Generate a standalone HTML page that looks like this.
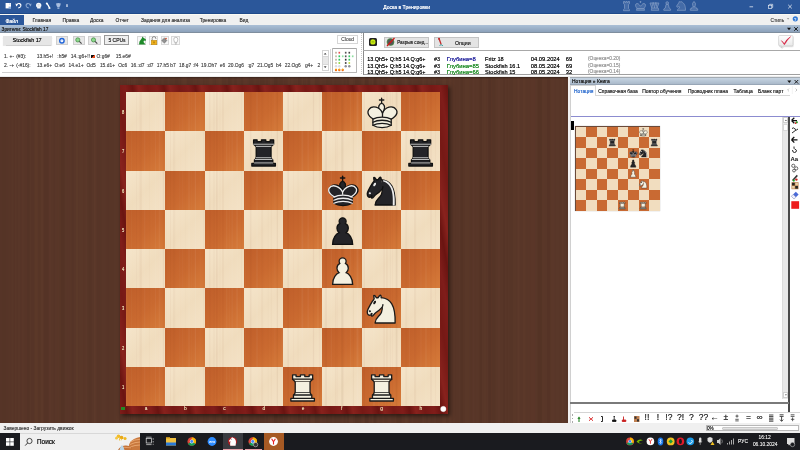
<!DOCTYPE html><html><head><meta charset="utf-8"><style>
*{margin:0;padding:0;box-sizing:border-box}
html,body{width:800px;height:450px;overflow:hidden;background:#fff;font-family:"Liberation Sans",sans-serif;position:relative}
.a{position:absolute}
.t{position:absolute;white-space:nowrap;line-height:1;text-shadow:0 0 0.25px currentColor}
svg{position:absolute;overflow:visible}
</style></head><body><div id="root" class="a" style="left:0;top:0;width:800px;height:450px;will-change:transform">
<div class="a" style="left:0px;top:0px;width:800px;height:13.7px;background:#2b579a;border-bottom:0.9px solid #1f4a8a"></div>
<div class="a" style="left:0px;top:13.7px;width:800px;height:11.3px;background:#f0f0f0;border-top:0.8px solid #fbfaf3"></div>
<div class="a" style="left:0px;top:25px;width:800px;height:8px;background:linear-gradient(#abbfd6,#8ca1ba);border-bottom:1px solid #7f8e9e"></div>
<div class="a" style="left:0px;top:33px;width:800px;height:42px;background:#fff"></div>
<div class="a" style="left:0px;top:75.8px;width:800px;height:1.4px;background:#ececec"></div>
<div class="a" style="left:362.5px;top:74.2px;width:437.5px;height:0.8px;background:#a0a0a0"></div>
<div class="a" style="left:0px;top:77px;width:568px;height:346px;background:#583628"></div>
<svg style="left:0;top:77px" width="568" height="346"><rect x="0.0" y="0" width="1.9" height="346" fill="#4f2f23" opacity="0.19"/><rect x="2.0" y="0" width="3.8" height="346" fill="#4a2b20" opacity="0.18"/><rect x="6.0" y="0" width="2.6" height="346" fill="#4a2b20" opacity="0.12"/><rect x="9.8" y="0" width="1.5" height="346" fill="#523125" opacity="0.19"/><rect x="13.8" y="0" width="1.1" height="346" fill="#4f2f23" opacity="0.24"/><rect x="16.7" y="0" width="0.8" height="346" fill="#523125" opacity="0.19"/><rect x="20.4" y="0" width="0.8" height="346" fill="#4f2f23" opacity="0.16"/><rect x="21.7" y="0" width="1.1" height="346" fill="#633d2d" opacity="0.22"/><rect x="24.8" y="0" width="1.0" height="346" fill="#523125" opacity="0.24"/><rect x="26.9" y="0" width="2.7" height="346" fill="#4a2b20" opacity="0.22"/><rect x="31.5" y="0" width="2.5" height="346" fill="#523125" opacity="0.19"/><rect x="34.9" y="0" width="2.9" height="346" fill="#67412f" opacity="0.18"/><rect x="38.6" y="0" width="1.3" height="346" fill="#4f2f23" opacity="0.12"/><rect x="40.8" y="0" width="2.5" height="346" fill="#633d2d" opacity="0.26"/><rect x="44.2" y="0" width="4.4" height="346" fill="#4a2b20" opacity="0.21"/><rect x="49.1" y="0" width="1.9" height="346" fill="#67412f" opacity="0.19"/><rect x="53.9" y="0" width="0.9" height="346" fill="#523125" opacity="0.23"/><rect x="57.4" y="0" width="1.8" height="346" fill="#5f3a2b" opacity="0.18"/><rect x="60.8" y="0" width="3.7" height="346" fill="#4a2b20" opacity="0.28"/><rect x="67.3" y="0" width="2.4" height="346" fill="#5f3a2b" opacity="0.11"/><rect x="71.9" y="0" width="1.8" height="346" fill="#523125" opacity="0.32"/><rect x="76.2" y="0" width="1.7" height="346" fill="#67412f" opacity="0.30"/><rect x="79.0" y="0" width="4.3" height="346" fill="#633d2d" opacity="0.14"/><rect x="83.6" y="0" width="0.8" height="346" fill="#633d2d" opacity="0.13"/><rect x="85.2" y="0" width="2.1" height="346" fill="#67412f" opacity="0.12"/><rect x="88.6" y="0" width="2.7" height="346" fill="#4f2f23" opacity="0.28"/><rect x="94.0" y="0" width="1.7" height="346" fill="#67412f" opacity="0.32"/><rect x="97.7" y="0" width="2.1" height="346" fill="#4f2f23" opacity="0.13"/><rect x="100.3" y="0" width="1.5" height="346" fill="#4f2f23" opacity="0.10"/><rect x="104.3" y="0" width="1.3" height="346" fill="#633d2d" opacity="0.10"/><rect x="106.9" y="0" width="2.0" height="346" fill="#523125" opacity="0.17"/><rect x="109.3" y="0" width="4.0" height="346" fill="#523125" opacity="0.24"/><rect x="115.5" y="0" width="2.4" height="346" fill="#5f3a2b" opacity="0.28"/><rect x="119.0" y="0" width="2.2" height="346" fill="#4a2b20" opacity="0.21"/><rect x="122.4" y="0" width="1.3" height="346" fill="#4f2f23" opacity="0.20"/><rect x="124.1" y="0" width="2.9" height="346" fill="#4a2b20" opacity="0.10"/><rect x="127.4" y="0" width="1.0" height="346" fill="#633d2d" opacity="0.24"/><rect x="128.7" y="0" width="1.4" height="346" fill="#67412f" opacity="0.13"/><rect x="130.8" y="0" width="2.0" height="346" fill="#633d2d" opacity="0.20"/><rect x="133.1" y="0" width="2.5" height="346" fill="#67412f" opacity="0.21"/><rect x="136.6" y="0" width="1.2" height="346" fill="#5f3a2b" opacity="0.18"/><rect x="138.5" y="0" width="3.8" height="346" fill="#4f2f23" opacity="0.21"/><rect x="143.0" y="0" width="4.3" height="346" fill="#633d2d" opacity="0.13"/><rect x="148.9" y="0" width="0.7" height="346" fill="#523125" opacity="0.17"/><rect x="151.5" y="0" width="1.0" height="346" fill="#633d2d" opacity="0.21"/><rect x="155.2" y="0" width="2.0" height="346" fill="#4f2f23" opacity="0.22"/><rect x="159.5" y="0" width="1.9" height="346" fill="#4f2f23" opacity="0.23"/><rect x="163.8" y="0" width="3.6" height="346" fill="#4f2f23" opacity="0.28"/><rect x="169.8" y="0" width="3.5" height="346" fill="#4f2f23" opacity="0.14"/><rect x="174.8" y="0" width="3.5" height="346" fill="#4a2b20" opacity="0.27"/><rect x="179.6" y="0" width="1.4" height="346" fill="#523125" opacity="0.31"/><rect x="182.3" y="0" width="4.3" height="346" fill="#633d2d" opacity="0.31"/><rect x="187.7" y="0" width="1.5" height="346" fill="#4f2f23" opacity="0.20"/><rect x="190.2" y="0" width="2.5" height="346" fill="#523125" opacity="0.28"/><rect x="194.1" y="0" width="3.1" height="346" fill="#5f3a2b" opacity="0.12"/><rect x="199.2" y="0" width="4.1" height="346" fill="#5f3a2b" opacity="0.27"/><rect x="204.8" y="0" width="1.3" height="346" fill="#5f3a2b" opacity="0.17"/><rect x="208.5" y="0" width="4.4" height="346" fill="#67412f" opacity="0.20"/><rect x="215.1" y="0" width="0.9" height="346" fill="#4f2f23" opacity="0.14"/><rect x="216.4" y="0" width="1.2" height="346" fill="#67412f" opacity="0.28"/><rect x="218.1" y="0" width="3.8" height="346" fill="#67412f" opacity="0.24"/><rect x="222.9" y="0" width="2.7" height="346" fill="#4f2f23" opacity="0.10"/><rect x="228.1" y="0" width="3.4" height="346" fill="#4a2b20" opacity="0.22"/><rect x="234.3" y="0" width="2.3" height="346" fill="#4f2f23" opacity="0.28"/><rect x="237.2" y="0" width="1.6" height="346" fill="#633d2d" opacity="0.21"/><rect x="241.1" y="0" width="1.9" height="346" fill="#523125" opacity="0.19"/><rect x="243.4" y="0" width="4.1" height="346" fill="#633d2d" opacity="0.30"/><rect x="249.5" y="0" width="3.8" height="346" fill="#523125" opacity="0.19"/><rect x="256.0" y="0" width="2.6" height="346" fill="#523125" opacity="0.13"/><rect x="260.1" y="0" width="4.0" height="346" fill="#4f2f23" opacity="0.23"/><rect x="266.4" y="0" width="1.2" height="346" fill="#4f2f23" opacity="0.20"/><rect x="269.8" y="0" width="2.8" height="346" fill="#633d2d" opacity="0.25"/><rect x="274.2" y="0" width="2.5" height="346" fill="#4a2b20" opacity="0.29"/><rect x="276.8" y="0" width="1.3" height="346" fill="#4a2b20" opacity="0.27"/><rect x="279.7" y="0" width="2.8" height="346" fill="#4a2b20" opacity="0.20"/><rect x="284.3" y="0" width="2.6" height="346" fill="#523125" opacity="0.14"/><rect x="287.7" y="0" width="2.6" height="346" fill="#67412f" opacity="0.21"/><rect x="291.0" y="0" width="2.6" height="346" fill="#633d2d" opacity="0.30"/><rect x="296.4" y="0" width="1.4" height="346" fill="#67412f" opacity="0.13"/><rect x="298.1" y="0" width="2.3" height="346" fill="#4a2b20" opacity="0.25"/><rect x="301.7" y="0" width="1.4" height="346" fill="#633d2d" opacity="0.27"/><rect x="305.9" y="0" width="1.2" height="346" fill="#5f3a2b" opacity="0.24"/><rect x="308.2" y="0" width="1.6" height="346" fill="#4f2f23" opacity="0.31"/><rect x="310.4" y="0" width="4.3" height="346" fill="#67412f" opacity="0.29"/><rect x="315.2" y="0" width="3.2" height="346" fill="#4f2f23" opacity="0.14"/><rect x="319.7" y="0" width="2.6" height="346" fill="#633d2d" opacity="0.19"/><rect x="323.4" y="0" width="1.0" height="346" fill="#633d2d" opacity="0.10"/><rect x="326.0" y="0" width="2.3" height="346" fill="#4a2b20" opacity="0.18"/><rect x="329.9" y="0" width="1.8" height="346" fill="#4a2b20" opacity="0.12"/><rect x="334.4" y="0" width="1.5" height="346" fill="#4a2b20" opacity="0.12"/><rect x="336.7" y="0" width="4.1" height="346" fill="#4f2f23" opacity="0.16"/><rect x="341.2" y="0" width="2.2" height="346" fill="#5f3a2b" opacity="0.28"/><rect x="344.2" y="0" width="1.2" height="346" fill="#523125" opacity="0.23"/><rect x="347.5" y="0" width="0.9" height="346" fill="#4a2b20" opacity="0.28"/><rect x="349.0" y="0" width="4.1" height="346" fill="#633d2d" opacity="0.31"/><rect x="355.0" y="0" width="3.7" height="346" fill="#4a2b20" opacity="0.23"/><rect x="359.4" y="0" width="1.6" height="346" fill="#4a2b20" opacity="0.20"/><rect x="362.1" y="0" width="2.8" height="346" fill="#633d2d" opacity="0.24"/><rect x="364.9" y="0" width="3.4" height="346" fill="#4a2b20" opacity="0.31"/><rect x="369.1" y="0" width="1.3" height="346" fill="#633d2d" opacity="0.24"/><rect x="372.0" y="0" width="1.4" height="346" fill="#67412f" opacity="0.21"/><rect x="373.9" y="0" width="2.0" height="346" fill="#4a2b20" opacity="0.32"/><rect x="376.0" y="0" width="0.7" height="346" fill="#523125" opacity="0.22"/><rect x="377.2" y="0" width="2.5" height="346" fill="#67412f" opacity="0.12"/><rect x="382.1" y="0" width="2.3" height="346" fill="#67412f" opacity="0.22"/><rect x="387.1" y="0" width="4.4" height="346" fill="#633d2d" opacity="0.25"/><rect x="394.4" y="0" width="1.9" height="346" fill="#5f3a2b" opacity="0.26"/><rect x="396.8" y="0" width="4.5" height="346" fill="#4a2b20" opacity="0.28"/><rect x="401.3" y="0" width="3.0" height="346" fill="#633d2d" opacity="0.19"/><rect x="404.5" y="0" width="3.2" height="346" fill="#67412f" opacity="0.29"/><rect x="409.7" y="0" width="1.7" height="346" fill="#4f2f23" opacity="0.25"/><rect x="411.5" y="0" width="1.3" height="346" fill="#633d2d" opacity="0.20"/><rect x="413.6" y="0" width="4.4" height="346" fill="#523125" opacity="0.17"/><rect x="418.1" y="0" width="4.0" height="346" fill="#4f2f23" opacity="0.18"/><rect x="422.1" y="0" width="2.1" height="346" fill="#67412f" opacity="0.16"/><rect x="426.2" y="0" width="1.6" height="346" fill="#4a2b20" opacity="0.12"/><rect x="430.2" y="0" width="1.2" height="346" fill="#523125" opacity="0.11"/><rect x="431.4" y="0" width="1.8" height="346" fill="#4f2f23" opacity="0.12"/><rect x="436.1" y="0" width="3.9" height="346" fill="#4f2f23" opacity="0.24"/><rect x="442.2" y="0" width="4.0" height="346" fill="#67412f" opacity="0.27"/><rect x="448.4" y="0" width="2.5" height="346" fill="#633d2d" opacity="0.26"/><rect x="452.8" y="0" width="0.8" height="346" fill="#5f3a2b" opacity="0.30"/><rect x="455.5" y="0" width="3.5" height="346" fill="#523125" opacity="0.13"/><rect x="460.5" y="0" width="2.6" height="346" fill="#4a2b20" opacity="0.28"/><rect x="464.8" y="0" width="4.1" height="346" fill="#5f3a2b" opacity="0.31"/><rect x="470.8" y="0" width="0.9" height="346" fill="#4a2b20" opacity="0.13"/><rect x="472.9" y="0" width="1.0" height="346" fill="#67412f" opacity="0.22"/><rect x="475.7" y="0" width="3.0" height="346" fill="#5f3a2b" opacity="0.15"/><rect x="479.6" y="0" width="2.4" height="346" fill="#4a2b20" opacity="0.26"/><rect x="483.5" y="0" width="2.7" height="346" fill="#5f3a2b" opacity="0.22"/><rect x="488.4" y="0" width="2.4" height="346" fill="#4a2b20" opacity="0.29"/><rect x="491.6" y="0" width="3.6" height="346" fill="#4f2f23" opacity="0.26"/><rect x="498.0" y="0" width="2.5" height="346" fill="#67412f" opacity="0.12"/><rect x="503.3" y="0" width="1.7" height="346" fill="#4a2b20" opacity="0.24"/><rect x="506.9" y="0" width="0.9" height="346" fill="#4f2f23" opacity="0.17"/><rect x="509.8" y="0" width="3.3" height="346" fill="#523125" opacity="0.22"/><rect x="513.1" y="0" width="0.8" height="346" fill="#633d2d" opacity="0.31"/><rect x="514.3" y="0" width="1.4" height="346" fill="#67412f" opacity="0.16"/><rect x="517.3" y="0" width="2.4" height="346" fill="#67412f" opacity="0.27"/><rect x="522.7" y="0" width="2.7" height="346" fill="#633d2d" opacity="0.32"/><rect x="528.2" y="0" width="0.7" height="346" fill="#67412f" opacity="0.12"/><rect x="530.4" y="0" width="4.5" height="346" fill="#633d2d" opacity="0.19"/><rect x="537.6" y="0" width="4.2" height="346" fill="#4a2b20" opacity="0.23"/><rect x="542.3" y="0" width="2.6" height="346" fill="#633d2d" opacity="0.13"/><rect x="547.4" y="0" width="2.6" height="346" fill="#4a2b20" opacity="0.25"/><rect x="550.7" y="0" width="4.1" height="346" fill="#67412f" opacity="0.19"/><rect x="555.2" y="0" width="4.3" height="346" fill="#5f3a2b" opacity="0.20"/><rect x="560.4" y="0" width="1.1" height="346" fill="#633d2d" opacity="0.18"/><rect x="562.0" y="0" width="1.9" height="346" fill="#633d2d" opacity="0.27"/><rect x="566.4" y="0" width="1.1" height="346" fill="#4f2f23" opacity="0.26"/></svg>
<div class="a" style="left:0px;top:77px;width:568px;height:2px;background:linear-gradient(rgba(0,0,0,0.35),rgba(0,0,0,0))"></div>
<div class="a" style="left:568px;top:77px;width:2px;height:346px;background:#f2f2f2"></div>
<div class="a" style="left:570px;top:77px;width:230px;height:346px;background:#fff"></div>
<div class="a" style="left:0px;top:423px;width:800px;height:10px;background:#f0f0f0"></div>
<div class="a" style="left:0px;top:433px;width:800px;height:17px;background:#1a1b1f"></div>
<svg style="left:0;top:0" width="80" height="13"><rect x="5.6" y="3" width="5.4" height="5.4" fill="#fff"/><path d="M8.6 6.6 h2.4 v1.8 h-2.4z" fill="#8fb0e0"/><rect x="9.2" y="3.3" width="1.2" height="1.6" fill="#c8d8f0"/><path d="M16.3 5.2 Q17.5 3.2 19.5 3.6 Q21.3 4.1 20.8 6.2 Q20.3 7.8 18.3 7.9" stroke="#fff" stroke-width="1.1" fill="none"/><path d="M15.4 3.6 L18.2 4.4 L16.2 6.6Z" fill="#fff"/><path d="M30.7 5.2 Q29.5 3.2 27.5 3.6 Q25.7 4.1 26.2 6.2 Q26.7 7.8 28.7 7.9" stroke="#8aa6cf" stroke-width="1.1" fill="none"/><path d="M31.6 3.6 L28.8 4.4 L30.8 6.6Z" fill="#8aa6cf"/><path d="M36 5.6 Q36 2.8 38.6 2.8 Q41.4 2.8 41.4 5.4 Q41.4 6.6 40.6 7 L40.6 8.6 L37.2 8.6 L37.2 7.4 Q36 7 36 5.6Z" fill="#f4f6fa"/><path d="M37.6 4.6 h2M37.6 6 h2" stroke="#9ab" stroke-width="0.4"/><path d="M46.8 3.4 L48.2 5.4 L49.8 8.4" stroke="#fff" stroke-width="1.3" fill="none"/><circle cx="46.8" cy="3.4" r="1" fill="#fff"/><rect x="48.4" y="7.6" width="2" height="1.2" fill="#fff"/><path d="M56 3.6 Q58.4 2.6 60.8 3.6 Q60.4 6.4 59.2 7.2 L57.6 7.2 Q56.4 6.4 56 3.6Z" fill="#a9bedf"/><rect x="57.4" y="7.6" width="2" height="1.2" fill="#a9bedf"/><rect x="66.2" y="4.2" width="1.6" height="2.8" fill="#b9c8e0"/></svg>
<div class="t" style="left:383.2px;top:5.4px;font-size:5.05px;color:#fff;">Доска в Тренировки</div>
<svg style="left:620px;top:0" width="90" height="13" opacity="0.42"><g fill="rgba(220,230,245,0.35)" stroke="#e8eef8" stroke-width="0.8"><path d="M3.5 1.5h1.4v1h1v-1h1.2v1h1v-1h1.4v2.2l-1 .8v4.2l1 1v1h-6v-1l1-1V4.5l-1-.8z"/><path d="M20.5 1v2M19.6 1.8h1.8M15.5 5.2c0-2 2.5-2.3 3.7-.5l1.3 1.6 1.3-1.6c1.2-1.8 3.7-1.5 3.7.5 0 1.5-1.2 2.5-1.5 3.5h-7c-.3-1-1.5-2-1.5-3.5zM16.8 8.7h7.4l.4 1.6h-8.2z"/><path d="M30 3l1.8 5 1.4-5.6 1.3 5.6 1.3-5.6 1.3 5.6 1.8-5zM31.8 8h6.4l.6 2.3h-7.6z"/><circle cx="47.2" cy="3" r="1.3"/><path d="M46 4.5l-.7 3.5-1.5 1v1.3h6.8v-1.3l-1.5-1-.7-3.5z"/><path d="M57 10.3h8.5c0-3.5-.5-7-4.5-8.8l-1 .8-.8-.8-.4 1.4-2.2 3.2.6 1.2 1.8-.8.8.5-1.3 2z"/><path d="M74 1.2v1.2M72.5 3.5c0-1 .8-1.3 1.5-1.3s1.5.3 1.5 1.3c0 1.3-.6 2.3-.3 3h-2.4c.3-.7-.3-1.7-.3-3zM71.5 7.8h5v1h1.2v1.5h-7.4V8.8h1.2z"/></g></svg>
<svg style="left:740px;top:0" width="60" height="13"><path d="M9.5 6.8h3.6" stroke="#fff" stroke-width="0.7"/><rect x="28.6" y="5.2" width="3.2" height="3.2" fill="none" stroke="#fff" stroke-width="0.6"/><path d="M29.6 5.2V4.3h3.1v3.1h-0.9" fill="none" stroke="#fff" stroke-width="0.6"/><path d="M48.2 4.8l3.6 3.6M51.8 4.8l-3.6 3.6" stroke="#fff" stroke-width="0.7"/></svg>
<div class="a" style="left:0px;top:14.5px;width:24px;height:10.5px;background:#2b579a"></div>
<div class="t" style="left:5.4px;top:19.0px;font-size:5.2px;color:#fff;">Файл</div>
<div class="t" style="left:32.5px;top:19.4px;font-size:4.9px;color:#444;">Главная</div>
<div class="t" style="left:62.6px;top:19.4px;font-size:4.9px;color:#444;">Правка</div>
<div class="t" style="left:90px;top:19.4px;font-size:4.9px;color:#444;">Доска</div>
<div class="t" style="left:115.4px;top:19.4px;font-size:4.9px;color:#444;">Отчет</div>
<div class="t" style="left:141px;top:19.4px;font-size:4.9px;color:#444;">Задания для анализа</div>
<div class="t" style="left:199.7px;top:19.4px;font-size:4.9px;color:#444;">Тренировка</div>
<div class="t" style="left:239.6px;top:19.4px;font-size:4.9px;color:#444;">Вид</div>
<div class="t" style="left:770.5px;top:18.8px;font-size:4.8px;color:#555;">Стиль</div>
<svg style="left:785px;top:15px" width="15" height="10"><path d="M1.8 3.2h2.6l-1.3 1.3z" fill="#888"/><circle cx="10.3" cy="3.8" r="2.6" fill="#2f78d6"/><text x="10.3" y="5.5" font-size="4" fill="#fff" text-anchor="middle" font-family="Liberation Sans" font-weight="bold">?</text></svg>
<div class="t" style="left:1.6px;top:27.8px;font-size:4.75px;color:#222;">Зрители: Stockfish 17</div>
<svg style="left:784px;top:25px" width="16" height="8"><path d="M3 2.8h4l-2 2.4z" fill="#111"/><path d="M10.2 2.2l3.6 3.6M13.8 2.2l-3.6 3.6" stroke="#111" stroke-width="0.9"/></svg>
<div class="a" style="left:3px;top:35.5px;width:49px;height:9.5px;background:#e6e6e6;box-shadow:0 0.5px 1px rgba(0,0,0,0.18)"></div>
<div class="t" style="left:12.6px;top:38.0px;font-size:5.55px;color:#222;letter-spacing:-0.1px">Stockfish 17</div>
<div class="a" style="left:56.4px;top:35.5px;width:11.8px;height:9.5px;background:#e8e8e8;border:0.8px solid #cfcfcf"></div>
<svg style="left:56.4px;top:35.5px" width="12" height="10"><circle cx="5.9" cy="4.75" r="2.9" fill="#1e63d8"/><circle cx="5.9" cy="4.75" r="1.5" fill="#fff"/><circle cx="5.9" cy="4.75" r="0.8" fill="#c8dcff"/></svg>
<div class="a" style="left:72.8px;top:35.5px;width:11.8px;height:9.5px;background:#e8e8e8;border:0.8px solid #cfcfcf"></div>
<div class="a" style="left:88px;top:35.5px;width:12.6px;height:9.5px;background:#e8e8e8;border:0.8px solid #cfcfcf"></div>
<svg style="left:72.8px;top:35.5px" width="30" height="10"><circle cx="4.8" cy="3.9" r="2.1" fill="#8ed88e" stroke="#2a7a2a" stroke-width="0.6"/><path d="M6.3 5.4 L8.6 7.7" stroke="#444" stroke-width="1.1"/><circle cx="20.5" cy="3.9" r="2.1" fill="#8ed88e" stroke="#2a7a2a" stroke-width="0.6"/><path d="M22 5.4 L24.3 7.7" stroke="#444" stroke-width="1.1"/></svg>
<div class="a" style="left:104.3px;top:35.2px;width:24.6px;height:9.8px;background:#efefef;border:0.8px solid #999"></div>
<div class="t" style="left:108.4px;top:38.4px;font-size:5.0px;color:#333;">5 CPUs</div>
<div class="a" style="left:137.4px;top:35.5px;width:9.099999999999994px;height:9.5px;background:#f8f8f8;border:0.6px solid #d8d8d8"></div>
<div class="a" style="left:148.6px;top:35.5px;width:9.0px;height:9.5px;background:#f8f8f8;border:0.6px solid #d8d8d8"></div>
<div class="a" style="left:160.5px;top:35.5px;width:8.0px;height:9.5px;background:#f8f8f8;border:0.6px solid #d8d8d8"></div>
<div class="a" style="left:171px;top:35.5px;width:9.199999999999989px;height:9.5px;background:#f8f8f8;border:0.6px solid #d8d8d8"></div>
<svg style="left:136px;top:35px" width="50" height="12"><path d="M3 9.5 L3.5 6.5 L6 3 L6.3 1.5 L7.5 2.8 L10 4.5 L9.5 6 L8 5.5 L7.5 7 L9.5 9.5Z" fill="#1e8a2a"/><rect x="15.2" y="5.2" width="5.6" height="4.6" fill="#f2b21a" stroke="#a87810" stroke-width="0.4"/><path d="M16.2 5.2 V3.4 A1.8 1.8 0 0 1 19.8 3.4 V4" fill="none" stroke="#777" stroke-width="0.8"/><rect x="17.6" y="6.5" width="0.8" height="1.8" fill="#7a5008"/><circle cx="28.3" cy="5.6" r="2.3" fill="#888"/><circle cx="28.3" cy="5.6" r="0.9" fill="#f0f0f0"/><path d="M28.3 2.6 v6 M25.3 5.6 h6" stroke="#888" stroke-width="0.8"/><circle cx="30" cy="3.6" r="0.8" fill="#d04020"/><path d="M37.8 4.3 A2 2 0 1 1 41.8 4.3 Q41.6 6 41 7.4 H38.6 Q38 6 37.8 4.3Z" fill="#fff" stroke="#999" stroke-width="0.6"/><path d="M38.8 8.3h2M39 9.2h1.6" stroke="#999" stroke-width="0.5"/></svg>
<div class="t" style="left:3.9px;top:55.2px;font-size:4.9px;color:#5a5a5a;">1.</div>
<div class="t" style="left:9.6px;top:55.2px;font-size:4.9px;color:#5a5a5a;">+-</div>
<div class="t" style="left:16.2px;top:55.2px;font-size:4.9px;color:#5a5a5a;">(#3):</div>
<div class="t" style="left:36.7px;top:55.2px;font-size:4.9px;color:#5a5a5a;">13.h5+!</div>
<div class="t" style="left:57.3px;top:55.2px;font-size:4.9px;color:#5a5a5a;">:h5#</div>
<div class="t" style="left:70.7px;top:55.2px;font-size:4.9px;color:#5a5a5a;">14.:g6+!!</div>
<div class="t" style="left:96.5px;top:55.2px;font-size:4.9px;color:#5a5a5a;">O:g6#</div>
<div class="t" style="left:115.7px;top:55.2px;font-size:4.9px;color:#5a5a5a;">15.e6#</div>
<div class="a" style="left:91.2px;top:54.6px;width:3.5px;height:3.6px;background:linear-gradient(135deg,#111 50%,#e8481a 50%)"></div>
<div class="t" style="left:3.9px;top:63.8px;font-size:4.9px;color:#5a5a5a;">2.</div>
<div class="t" style="left:9.6px;top:63.8px;font-size:4.9px;color:#5a5a5a;">-+</div>
<div class="t" style="left:16.2px;top:63.8px;font-size:4.9px;color:#5a5a5a;">(-#16):</div>
<div class="t" style="left:36.9px;top:63.8px;font-size:4.9px;color:#5a5a5a;">13.e6+</div>
<div class="t" style="left:54.4px;top:63.8px;font-size:4.9px;color:#5a5a5a;">O:e6</div>
<div class="t" style="left:68.6px;top:63.8px;font-size:4.9px;color:#5a5a5a;">14.e1+</div>
<div class="t" style="left:86.5px;top:63.8px;font-size:4.9px;color:#5a5a5a;">Od5</div>
<div class="t" style="left:99.9px;top:63.8px;font-size:4.9px;color:#5a5a5a;">15.d1+</div>
<div class="t" style="left:118.2px;top:63.8px;font-size:4.9px;color:#5a5a5a;">Oc6</div>
<div class="t" style="left:130.8px;top:63.8px;font-size:4.9px;color:#5a5a5a;">16.:d7</div>
<div class="t" style="left:146.6px;top:63.8px;font-size:4.9px;color:#5a5a5a;">:d7</div>
<div class="t" style="left:156.8px;top:63.8px;font-size:4.9px;color:#5a5a5a;">17.h5</div>
<div class="t" style="left:170.3px;top:63.8px;font-size:4.9px;color:#5a5a5a;">b7</div>
<div class="t" style="left:179px;top:63.8px;font-size:4.9px;color:#5a5a5a;">18.g7</div>
<div class="t" style="left:193px;top:63.8px;font-size:4.9px;color:#5a5a5a;">:f4</div>
<div class="t" style="left:201px;top:63.8px;font-size:4.9px;color:#5a5a5a;">19.Oh7</div>
<div class="t" style="left:219.8px;top:63.8px;font-size:4.9px;color:#5a5a5a;">e6</div>
<div class="t" style="left:228px;top:63.8px;font-size:4.9px;color:#5a5a5a;">20.Og6</div>
<div class="t" style="left:247.5px;top:63.8px;font-size:4.9px;color:#5a5a5a;">:g7</div>
<div class="t" style="left:257.2px;top:63.8px;font-size:4.9px;color:#5a5a5a;">21.Og5</div>
<div class="t" style="left:276px;top:63.8px;font-size:4.9px;color:#5a5a5a;">b4</div>
<div class="t" style="left:284.7px;top:63.8px;font-size:4.9px;color:#5a5a5a;">22.Og6</div>
<div class="t" style="left:304.9px;top:63.8px;font-size:4.9px;color:#5a5a5a;">g4+</div>
<div class="t" style="left:317.6px;top:63.8px;font-size:4.9px;color:#5a5a5a;">23.</div>
<div class="a" style="left:320px;top:48.6px;width:10.5px;height:25px;background:#fff"></div>
<div class="a" style="left:330.2px;top:48.7px;width:0.7px;height:23.8px;background:#dadada"></div>
<div class="a" style="left:2px;top:72.2px;width:329px;height:0.7px;background:#d0d0d0"></div>
<div class="a" style="left:322.3px;top:50.3px;width:6.4px;height:20.4px;background:#e8e8e8;border:0.6px solid #d4d4d4"></div>
<div class="a" style="left:322.6px;top:50.6px;width:5.8px;height:6.4px;background:#fff;border-bottom:0.6px solid #d8d8d8"></div>
<div class="a" style="left:322.6px;top:64.2px;width:5.8px;height:6.3px;background:#fff;border-top:0.6px solid #d8d8d8"></div>
<svg style="left:322.3px;top:50.3px" width="7" height="21"><path d="M2.2 4.3 L3.2 3.2 L4.2 4.3Z" fill="#333" stroke="#333" stroke-width="0.4"/><path d="M2.2 16.6 L3.2 17.7 L4.2 16.6Z" fill="#333" stroke="#333" stroke-width="0.4"/></svg>
<div class="a" style="left:332.3px;top:48.3px;width:24.4px;height:24.4px;background:#fff;border:0.8px solid #b8b8b8;border-top:1.1px solid #a8a8a8;border-radius:1px"></div>
<svg style="left:332px;top:48px" width="25" height="25"><rect x="3.2" y="3.8" width="1.6" height="1.8" fill="#b8ae98"/><rect x="6.5" y="3.8" width="1.6" height="1.8" fill="#e85050"/><rect x="12.9" y="3.8" width="1.6" height="1.8" fill="#555"/><rect x="16.5" y="3.8" width="1.6" height="1.8" fill="#444"/><rect x="3.2" y="7.4" width="1.6" height="1.8" fill="#c4b8a0"/><rect x="6.5" y="7.4" width="1.6" height="1.8" fill="#30c860"/><rect x="9.9" y="7.4" width="1.6" height="1.8" fill="#8ee0a0"/><rect x="12.9" y="7.4" width="1.6" height="1.8" fill="#555"/><rect x="16.5" y="7.4" width="1.6" height="1.8" fill="#30c860"/><rect x="19.9" y="7.4" width="1.6" height="1.8" fill="#8ee0a0"/><rect x="3.2" y="10.8" width="1.6" height="1.8" fill="#b8ae98"/><rect x="6.5" y="10.8" width="1.6" height="1.8" fill="#30c860"/><rect x="12.9" y="10.8" width="1.6" height="1.8" fill="#333"/><rect x="16.5" y="10.8" width="1.6" height="1.8" fill="#30c860"/><rect x="3.2" y="14.1" width="1.6" height="1.8" fill="#c8c0a8"/><rect x="6.5" y="14.1" width="1.6" height="1.8" fill="#90d840"/><rect x="12.9" y="14.1" width="1.6" height="1.8" fill="#444"/><rect x="16.5" y="14.1" width="1.6" height="1.8" fill="#c0d840"/><circle cx="4.0" cy="18.3" r="1.2" fill="#d8dce4"/><circle cx="7.3" cy="18.3" r="1.2" fill="#d8dce4"/><circle cx="13.7" cy="18.3" r="1.2" fill="#8a8e96"/><circle cx="17.3" cy="18.3" r="1.2" fill="#8a8e96"/><circle cx="4.0" cy="22.0" r="1.2" fill="#f07010"/><circle cx="4.0" cy="21.2" r="0.6" fill="#f8c020"/><circle cx="7.3" cy="22.0" r="1.2" fill="#f07010"/><circle cx="7.3" cy="21.2" r="0.6" fill="#f8c020"/><circle cx="10.7" cy="22.0" r="1.2" fill="#f07010"/><circle cx="10.7" cy="21.2" r="0.6" fill="#f8c020"/></svg>
<div class="a" style="left:337px;top:35.2px;width:21.3px;height:9.2px;background:#fff;border:1px solid #d6d6d6"></div>
<div class="t" style="left:341.3px;top:38.4px;font-size:4.9px;color:#666;">Cloud</div>
<div class="a" style="left:361px;top:33px;width:0.8px;height:42px;background:repeating-linear-gradient(#c8c8c8 0 1px,#fff 1px 2px)"></div>
<div class="a" style="left:362.5px;top:33px;width:0.8px;height:42px;background:#8a8a8a"></div>
<div class="a" style="left:363px;top:49.6px;width:437px;height:0.7px;background:#a8a8a8"></div>
<div class="a" style="left:369.4px;top:37.8px;width:7.8px;height:7.8px;background:#222;border-radius:1.5px"></div>
<svg style="left:369.4px;top:37.8px" width="8" height="8"><circle cx="3.9" cy="3.9" r="2.6" fill="#c8ec10"/><path d="M2.6 3.9h2.6" stroke="#5a7000" stroke-width="0.5"/></svg>
<div class="a" style="left:384px;top:36.5px;width:44.8px;height:11px;background:#e4e4e4;border:1px solid #c4c4c4"></div>
<svg style="left:386px;top:37px" width="10" height="10"><circle cx="4.5" cy="5" r="3.5" fill="#555" stroke="#3a9a3a" stroke-width="0.6"/><path d="M1 9 L8.5 1" stroke="#d01818" stroke-width="1.2"/></svg>
<div class="t" style="left:397.2px;top:40.5px;font-size:4.6px;color:#333;">Разрыв соед...</div>
<div class="a" style="left:434px;top:36.5px;width:45px;height:11px;background:#e4e4e4;border:1px solid #c4c4c4"></div>
<svg style="left:436px;top:37px" width="10" height="10"><path d="M3 1.5 L5.2 7.5" stroke="#c02a2a" stroke-width="1.3"/><circle cx="3" cy="1.8" r="1" fill="#c02a2a"/><path d="M3.5 8.5 Q5 6.8 7 8.8" stroke="#2aa0a0" stroke-width="0.9" fill="none"/></svg>
<div class="t" style="left:455px;top:40.5px;font-size:5.2px;color:#333;">Опции</div>
<div class="t" style="left:367.2px;top:57.4px;font-size:5.45px;color:#111;">13.Qh5+ Q:h5 14.Q:g6+</div>
<div class="t" style="left:434px;top:57.4px;font-size:5.45px;color:#222;">#3</div>
<div class="t" style="left:446.7px;top:57.4px;font-size:5.85px;color:#1e1e9a;">Глубина=8</div>
<div class="t" style="left:485px;top:57.4px;font-size:5.6px;color:#1a1a1a;">Fritz 18</div>
<div class="t" style="left:530.8px;top:57.4px;font-size:5.8px;color:#1a1a1a;">04.09.2024</div>
<div class="t" style="left:565.8px;top:57.4px;font-size:5.8px;color:#1a1a1a;">69</div>
<div class="t" style="left:588px;top:57.4px;font-size:4.85px;color:#999;">(Оценка=0.20)</div>
<div class="t" style="left:367.2px;top:63.7px;font-size:5.45px;color:#111;">13.Qh5+ Q:h5 14.Q:g6+</div>
<div class="t" style="left:434px;top:63.7px;font-size:5.45px;color:#222;">#3</div>
<div class="t" style="left:446.7px;top:63.7px;font-size:5.85px;color:#1a8a22;">Глубина=85</div>
<div class="t" style="left:485px;top:63.7px;font-size:5.6px;color:#1a1a1a;">Stockfish 16.1</div>
<div class="t" style="left:530.8px;top:63.7px;font-size:5.8px;color:#1a1a1a;">08.05.2024</div>
<div class="t" style="left:565.8px;top:63.7px;font-size:5.8px;color:#1a1a1a;">69</div>
<div class="t" style="left:588px;top:63.7px;font-size:4.85px;color:#999;">(Оценка=0.15)</div>
<div class="t" style="left:367.2px;top:69.7px;font-size:5.45px;color:#111;">13.Qh5+ Q:h5 14.Q:g6+</div>
<div class="t" style="left:434px;top:69.7px;font-size:5.45px;color:#222;">#3</div>
<div class="t" style="left:446.7px;top:69.7px;font-size:5.85px;color:#1a8a22;">Глубина=66</div>
<div class="t" style="left:485px;top:69.7px;font-size:5.6px;color:#1a1a1a;">Stockfish 15</div>
<div class="t" style="left:530.8px;top:69.7px;font-size:5.8px;color:#1a1a1a;">08.05.2024</div>
<div class="t" style="left:565.8px;top:69.7px;font-size:5.8px;color:#1a1a1a;">32</div>
<div class="t" style="left:588px;top:69.7px;font-size:4.85px;color:#999;">(Оценка=0.14)</div>
<svg style="left:776px;top:34px" width="20" height="16"><defs><linearGradient id="cb" x1="0" y1="0" x2="0" y2="1"><stop offset="0" stop-color="#fff"/><stop offset="1" stop-color="#e4e4e4"/></linearGradient></defs><path d="M3.8 2 H15.8 Q17 2 17 3.2 V11.2 Q17 12.4 15.8 12.4 H7.5 L5 14.6 L5.4 12.4 H3.8 Q2.6 12.4 2.6 11.2 V3.2 Q2.6 2 3.8 2Z" fill="#d8d8d8" transform="translate(0.6,0.8)" opacity="0.7"/><path d="M3.8 1.5 H15.8 Q17 1.5 17 2.7 V10.7 Q17 11.9 15.8 11.9 H7.5 L5 14 L5.4 11.9 H3.8 Q2.6 11.9 2.6 10.7 V2.7 Q2.6 1.5 3.8 1.5Z" fill="url(#cb)" stroke="#c4c4c4" stroke-width="0.6"/><path d="M5.4 6.6 Q6.6 7.6 8.2 9.8 Q10.5 5.2 14.6 2.6 Q11.4 5.8 8.4 10.8 Q7 8.4 5.4 6.6Z" fill="#d41c3c" stroke="#d41c3c" stroke-width="0.5" stroke-linejoin="round"/></svg>
<div class="a" style="left:120px;top:85px;width:328px;height:329px;background:repeating-linear-gradient(80deg,#801d1a 0px,#6a1411 7px,#88221d 13px,#761915 22px,#801d1a 31px);box-shadow:1.5px 1.5px 4px rgba(0,0,0,0.5)"></div>
<svg style="left:126.3px;top:92.0px" width="314.0" height="314.0" viewBox="0 0 8 8" shape-rendering="crispEdges"><defs><linearGradient id="lg" x1="0" y1="0" x2="1" y2="1"><stop offset="0" stop-color="#f5e5cb"/><stop offset="0.5" stop-color="#f0dcbd"/><stop offset="1" stop-color="#f4e2c6"/></linearGradient><linearGradient id="dg" x1="0" y1="0" x2="1" y2="1"><stop offset="0" stop-color="#bf5e2a"/><stop offset="0.55" stop-color="#ca6a30"/><stop offset="1" stop-color="#d67b3a"/></linearGradient></defs><rect x="0" y="0" width="8" height="8" fill="#c4632c"/><rect x="0" y="0" width="1" height="1" fill="url(#lg)"/><rect x="1" y="0" width="1" height="1" fill="url(#dg)"/><rect x="2" y="0" width="1" height="1" fill="url(#lg)"/><rect x="3" y="0" width="1" height="1" fill="url(#dg)"/><rect x="4" y="0" width="1" height="1" fill="url(#lg)"/><rect x="5" y="0" width="1" height="1" fill="url(#dg)"/><rect x="6" y="0" width="1" height="1" fill="url(#lg)"/><rect x="7" y="0" width="1" height="1" fill="url(#dg)"/><rect x="0" y="1" width="1" height="1" fill="url(#dg)"/><rect x="1" y="1" width="1" height="1" fill="url(#lg)"/><rect x="2" y="1" width="1" height="1" fill="url(#dg)"/><rect x="3" y="1" width="1" height="1" fill="url(#lg)"/><rect x="4" y="1" width="1" height="1" fill="url(#dg)"/><rect x="5" y="1" width="1" height="1" fill="url(#lg)"/><rect x="6" y="1" width="1" height="1" fill="url(#dg)"/><rect x="7" y="1" width="1" height="1" fill="url(#lg)"/><rect x="0" y="2" width="1" height="1" fill="url(#lg)"/><rect x="1" y="2" width="1" height="1" fill="url(#dg)"/><rect x="2" y="2" width="1" height="1" fill="url(#lg)"/><rect x="3" y="2" width="1" height="1" fill="url(#dg)"/><rect x="4" y="2" width="1" height="1" fill="url(#lg)"/><rect x="5" y="2" width="1" height="1" fill="url(#dg)"/><rect x="6" y="2" width="1" height="1" fill="url(#lg)"/><rect x="7" y="2" width="1" height="1" fill="url(#dg)"/><rect x="0" y="3" width="1" height="1" fill="url(#dg)"/><rect x="1" y="3" width="1" height="1" fill="url(#lg)"/><rect x="2" y="3" width="1" height="1" fill="url(#dg)"/><rect x="3" y="3" width="1" height="1" fill="url(#lg)"/><rect x="4" y="3" width="1" height="1" fill="url(#dg)"/><rect x="5" y="3" width="1" height="1" fill="url(#lg)"/><rect x="6" y="3" width="1" height="1" fill="url(#dg)"/><rect x="7" y="3" width="1" height="1" fill="url(#lg)"/><rect x="0" y="4" width="1" height="1" fill="url(#lg)"/><rect x="1" y="4" width="1" height="1" fill="url(#dg)"/><rect x="2" y="4" width="1" height="1" fill="url(#lg)"/><rect x="3" y="4" width="1" height="1" fill="url(#dg)"/><rect x="4" y="4" width="1" height="1" fill="url(#lg)"/><rect x="5" y="4" width="1" height="1" fill="url(#dg)"/><rect x="6" y="4" width="1" height="1" fill="url(#lg)"/><rect x="7" y="4" width="1" height="1" fill="url(#dg)"/><rect x="0" y="5" width="1" height="1" fill="url(#dg)"/><rect x="1" y="5" width="1" height="1" fill="url(#lg)"/><rect x="2" y="5" width="1" height="1" fill="url(#dg)"/><rect x="3" y="5" width="1" height="1" fill="url(#lg)"/><rect x="4" y="5" width="1" height="1" fill="url(#dg)"/><rect x="5" y="5" width="1" height="1" fill="url(#lg)"/><rect x="6" y="5" width="1" height="1" fill="url(#dg)"/><rect x="7" y="5" width="1" height="1" fill="url(#lg)"/><rect x="0" y="6" width="1" height="1" fill="url(#lg)"/><rect x="1" y="6" width="1" height="1" fill="url(#dg)"/><rect x="2" y="6" width="1" height="1" fill="url(#lg)"/><rect x="3" y="6" width="1" height="1" fill="url(#dg)"/><rect x="4" y="6" width="1" height="1" fill="url(#lg)"/><rect x="5" y="6" width="1" height="1" fill="url(#dg)"/><rect x="6" y="6" width="1" height="1" fill="url(#lg)"/><rect x="7" y="6" width="1" height="1" fill="url(#dg)"/><rect x="0" y="7" width="1" height="1" fill="url(#dg)"/><rect x="1" y="7" width="1" height="1" fill="url(#lg)"/><rect x="2" y="7" width="1" height="1" fill="url(#dg)"/><rect x="3" y="7" width="1" height="1" fill="url(#lg)"/><rect x="4" y="7" width="1" height="1" fill="url(#dg)"/><rect x="5" y="7" width="1" height="1" fill="url(#lg)"/><rect x="6" y="7" width="1" height="1" fill="url(#dg)"/><rect x="7" y="7" width="1" height="1" fill="url(#lg)"/><g shape-rendering="auto"><rect x="0.000" y="0" width="0.033" height="8" fill="#fff4e0" opacity="0.04"/><rect x="0.138" y="0" width="0.019" height="8" fill="#fff4e0" opacity="0.05"/><rect x="0.257" y="0" width="0.015" height="8" fill="#5a2008" opacity="0.03"/><rect x="0.345" y="0" width="0.055" height="8" fill="#7a3010" opacity="0.04"/><rect x="0.460" y="0" width="0.033" height="8" fill="#ffffff" opacity="0.04"/><rect x="0.595" y="0" width="0.013" height="8" fill="#7a3010" opacity="0.03"/><rect x="0.653" y="0" width="0.012" height="8" fill="#fff4e0" opacity="0.03"/><rect x="0.743" y="0" width="0.020" height="8" fill="#ffffff" opacity="0.05"/><rect x="0.833" y="0" width="0.043" height="8" fill="#fff4e0" opacity="0.05"/><rect x="0.937" y="0" width="0.038" height="8" fill="#7a3010" opacity="0.05"/><rect x="1.026" y="0" width="0.021" height="8" fill="#5a2008" opacity="0.02"/><rect x="1.124" y="0" width="0.015" height="8" fill="#7a3010" opacity="0.05"/><rect x="1.198" y="0" width="0.058" height="8" fill="#7a3010" opacity="0.03"/><rect x="1.368" y="0" width="0.013" height="8" fill="#fff4e0" opacity="0.06"/><rect x="1.441" y="0" width="0.014" height="8" fill="#ffffff" opacity="0.05"/><rect x="1.501" y="0" width="0.014" height="8" fill="#5a2008" opacity="0.02"/><rect x="1.577" y="0" width="0.056" height="8" fill="#ffffff" opacity="0.03"/><rect x="1.663" y="0" width="0.013" height="8" fill="#fff4e0" opacity="0.03"/><rect x="1.752" y="0" width="0.032" height="8" fill="#ffffff" opacity="0.06"/><rect x="1.881" y="0" width="0.031" height="8" fill="#fff4e0" opacity="0.02"/><rect x="1.974" y="0" width="0.021" height="8" fill="#5a2008" opacity="0.05"/><rect x="2.112" y="0" width="0.040" height="8" fill="#7a3010" opacity="0.03"/><rect x="2.212" y="0" width="0.053" height="8" fill="#7a3010" opacity="0.02"/><rect x="2.299" y="0" width="0.032" height="8" fill="#7a3010" opacity="0.05"/><rect x="2.384" y="0" width="0.025" height="8" fill="#7a3010" opacity="0.02"/><rect x="2.450" y="0" width="0.042" height="8" fill="#7a3010" opacity="0.04"/><rect x="2.549" y="0" width="0.033" height="8" fill="#fff4e0" opacity="0.05"/><rect x="2.615" y="0" width="0.029" height="8" fill="#ffffff" opacity="0.03"/><rect x="2.687" y="0" width="0.041" height="8" fill="#ffffff" opacity="0.03"/><rect x="2.810" y="0" width="0.038" height="8" fill="#fff4e0" opacity="0.06"/><rect x="2.928" y="0" width="0.031" height="8" fill="#7a3010" opacity="0.02"/><rect x="3.031" y="0" width="0.023" height="8" fill="#fff4e0" opacity="0.03"/><rect x="3.156" y="0" width="0.040" height="8" fill="#5a2008" opacity="0.04"/><rect x="3.309" y="0" width="0.059" height="8" fill="#ffffff" opacity="0.03"/><rect x="3.443" y="0" width="0.053" height="8" fill="#7a3010" opacity="0.03"/><rect x="3.608" y="0" width="0.020" height="8" fill="#7a3010" opacity="0.02"/><rect x="3.689" y="0" width="0.022" height="8" fill="#7a3010" opacity="0.03"/><rect x="3.768" y="0" width="0.039" height="8" fill="#ffffff" opacity="0.02"/><rect x="3.841" y="0" width="0.033" height="8" fill="#5a2008" opacity="0.05"/><rect x="3.963" y="0" width="0.039" height="8" fill="#ffffff" opacity="0.04"/><rect x="4.114" y="0" width="0.034" height="8" fill="#5a2008" opacity="0.05"/><rect x="4.264" y="0" width="0.011" height="8" fill="#7a3010" opacity="0.04"/><rect x="4.368" y="0" width="0.026" height="8" fill="#7a3010" opacity="0.02"/><rect x="4.469" y="0" width="0.047" height="8" fill="#ffffff" opacity="0.05"/><rect x="4.627" y="0" width="0.028" height="8" fill="#fff4e0" opacity="0.06"/><rect x="4.762" y="0" width="0.031" height="8" fill="#7a3010" opacity="0.05"/><rect x="4.870" y="0" width="0.041" height="8" fill="#fff4e0" opacity="0.04"/><rect x="4.932" y="0" width="0.014" height="8" fill="#7a3010" opacity="0.05"/><rect x="5.065" y="0" width="0.054" height="8" fill="#5a2008" opacity="0.04"/><rect x="5.213" y="0" width="0.039" height="8" fill="#fff4e0" opacity="0.04"/><rect x="5.326" y="0" width="0.036" height="8" fill="#7a3010" opacity="0.03"/><rect x="5.391" y="0" width="0.011" height="8" fill="#7a3010" opacity="0.04"/><rect x="5.483" y="0" width="0.056" height="8" fill="#5a2008" opacity="0.06"/><rect x="5.596" y="0" width="0.017" height="8" fill="#ffffff" opacity="0.04"/><rect x="5.709" y="0" width="0.027" height="8" fill="#fff4e0" opacity="0.04"/><rect x="5.780" y="0" width="0.030" height="8" fill="#5a2008" opacity="0.03"/><rect x="5.873" y="0" width="0.050" height="8" fill="#ffffff" opacity="0.06"/><rect x="5.982" y="0" width="0.039" height="8" fill="#5a2008" opacity="0.03"/><rect x="6.055" y="0" width="0.028" height="8" fill="#7a3010" opacity="0.05"/><rect x="6.197" y="0" width="0.024" height="8" fill="#ffffff" opacity="0.02"/><rect x="6.288" y="0" width="0.056" height="8" fill="#fff4e0" opacity="0.04"/><rect x="6.416" y="0" width="0.044" height="8" fill="#fff4e0" opacity="0.03"/><rect x="6.563" y="0" width="0.024" height="8" fill="#7a3010" opacity="0.05"/><rect x="6.635" y="0" width="0.028" height="8" fill="#7a3010" opacity="0.05"/><rect x="6.723" y="0" width="0.019" height="8" fill="#5a2008" opacity="0.03"/><rect x="6.777" y="0" width="0.012" height="8" fill="#7a3010" opacity="0.04"/><rect x="6.872" y="0" width="0.043" height="8" fill="#5a2008" opacity="0.06"/><rect x="7.003" y="0" width="0.020" height="8" fill="#fff4e0" opacity="0.03"/><rect x="7.115" y="0" width="0.048" height="8" fill="#7a3010" opacity="0.03"/><rect x="7.210" y="0" width="0.027" height="8" fill="#ffffff" opacity="0.04"/><rect x="7.336" y="0" width="0.055" height="8" fill="#7a3010" opacity="0.04"/><rect x="7.501" y="0" width="0.029" height="8" fill="#fff4e0" opacity="0.04"/><rect x="7.613" y="0" width="0.055" height="8" fill="#fff4e0" opacity="0.04"/><rect x="7.753" y="0" width="0.035" height="8" fill="#5a2008" opacity="0.04"/><rect x="7.874" y="0" width="0.020" height="8" fill="#7a3010" opacity="0.03"/></g></svg>
<div class="t" style="left:121.8px;top:110.225px;font-size:5.2px;color:#eadcb4;transform:scaleX(0.8);transform-origin:0 0">8</div>
<div class="t" style="left:121.8px;top:149.475px;font-size:5.2px;color:#eadcb4;transform:scaleX(0.8);transform-origin:0 0">7</div>
<div class="t" style="left:121.8px;top:188.725px;font-size:5.2px;color:#eadcb4;transform:scaleX(0.8);transform-origin:0 0">6</div>
<div class="t" style="left:121.8px;top:227.975px;font-size:5.2px;color:#eadcb4;transform:scaleX(0.8);transform-origin:0 0">5</div>
<div class="t" style="left:121.8px;top:267.225px;font-size:5.2px;color:#eadcb4;transform:scaleX(0.8);transform-origin:0 0">4</div>
<div class="t" style="left:121.8px;top:306.475px;font-size:5.2px;color:#eadcb4;transform:scaleX(0.8);transform-origin:0 0">3</div>
<div class="t" style="left:121.8px;top:345.725px;font-size:5.2px;color:#eadcb4;transform:scaleX(0.8);transform-origin:0 0">2</div>
<div class="t" style="left:121.8px;top:384.975px;font-size:5.2px;color:#eadcb4;transform:scaleX(0.8);transform-origin:0 0">1</div>
<div class="t" style="left:144.72500000000002px;top:406.8px;font-size:4.8px;color:#e8d8b0;">a</div>
<div class="t" style="left:183.97500000000002px;top:406.8px;font-size:4.8px;color:#e8d8b0;">b</div>
<div class="t" style="left:223.22500000000002px;top:406.8px;font-size:4.8px;color:#e8d8b0;">c</div>
<div class="t" style="left:262.475px;top:406.8px;font-size:4.8px;color:#e8d8b0;">d</div>
<div class="t" style="left:301.725px;top:406.8px;font-size:4.8px;color:#e8d8b0;">e</div>
<div class="t" style="left:340.975px;top:406.8px;font-size:4.8px;color:#e8d8b0;">f</div>
<div class="t" style="left:380.225px;top:406.8px;font-size:4.8px;color:#e8d8b0;">g</div>
<div class="t" style="left:419.475px;top:406.8px;font-size:4.8px;color:#e8d8b0;">h</div>
<div class="a" style="left:121.2px;top:407.2px;width:3.8px;height:3px;background:#248a24"></div>
<svg style="left:439px;top:405px" width="8" height="8"><circle cx="4.3" cy="4" r="2.7" fill="#fff" stroke="#e8e8e8" stroke-width="0.4"/></svg>
<svg style="left:361.80px;top:92.70px" width="39.25" height="39.25" viewBox="0 0 45 45"><g fill="none" fill-rule="evenodd" stroke="#1a1a1a" stroke-linecap="round" stroke-linejoin="round" stroke-width="1.5"><path stroke-linejoin="miter" d="M22.5 11.63V6M20 8h5"/><path fill="#f4f0e0" stroke-linecap="butt" stroke-linejoin="miter" d="M22.5 25s4.5-7.5 3-10.5c0 0-1-2.5-3-2.5s-3 2.5-3 2.5c-1.5 3 3 10.5 3 10.5"/><path fill="#f4f0e0" d="M12.5 37c5.5 3.5 15.5 3.5 21 0v-7s9-4.5 6-10.5c-4-6.5-13.5-3.5-16 4V27v-3.5c-2.5-7.5-12-10.5-16-4-3 6 5 10 5 10V37z"/><path d="M12.5 30c5.5-3 15.5-3 21 0m-21 3.5c5.5-3 15.5-3 21 0m-21 3.5c5.5-3 15.5-3 21 0"/></g></svg>
<svg style="left:244.05px;top:131.95px" width="39.25" height="39.25" viewBox="0 0 45 45"><g fill="#242428" fill-rule="evenodd" stroke="#111" stroke-linecap="round" stroke-linejoin="round" stroke-width="1.5"><path stroke-linecap="butt" d="M9 39h27v-3H9v3zM12.5 32l1.5-2.5h17l1.5 2.5h-20zM12 36v-4h21v4H12z"/><path stroke-linecap="butt" stroke-linejoin="miter" d="M14 29.5v-13h17v13H14z"/><path stroke-linecap="butt" d="M14 16.5L11 14h23l-3 2.5H14zM11 14V9h4v2h5V9h5v2h5V9h4v5H11z"/><path fill="none" stroke="#ddd" stroke-linejoin="miter" stroke-width="1" d="M12 35.5h21M13 31.5h19M14 29.5h17M14 16.5h17M11 14h23"/></g></svg>
<svg style="left:401.05px;top:131.95px" width="39.25" height="39.25" viewBox="0 0 45 45"><g fill="#242428" fill-rule="evenodd" stroke="#111" stroke-linecap="round" stroke-linejoin="round" stroke-width="1.5"><path stroke-linecap="butt" d="M9 39h27v-3H9v3zM12.5 32l1.5-2.5h17l1.5 2.5h-20zM12 36v-4h21v4H12z"/><path stroke-linecap="butt" stroke-linejoin="miter" d="M14 29.5v-13h17v13H14z"/><path stroke-linecap="butt" d="M14 16.5L11 14h23l-3 2.5H14zM11 14V9h4v2h5V9h5v2h5V9h4v5H11z"/><path fill="none" stroke="#ddd" stroke-linejoin="miter" stroke-width="1" d="M12 35.5h21M13 31.5h19M14 29.5h17M14 16.5h17M11 14h23"/></g></svg>
<svg style="left:322.55px;top:171.20px" width="39.25" height="39.25" viewBox="0 0 45 45"><g fill="none" fill-rule="evenodd" stroke="#111" stroke-linecap="round" stroke-linejoin="round" stroke-width="1.5"><path stroke-linejoin="miter" d="M22.5 11.63V6"/><path fill="#242428" stroke-linecap="butt" stroke-linejoin="miter" d="M22.5 25s4.5-7.5 3-10.5c0 0-1-2.5-3-2.5s-3 2.5-3 2.5c-1.5 3 3 10.5 3 10.5"/><path fill="#242428" d="M12.5 37c5.5 3.5 15.5 3.5 21 0v-7s9-4.5 6-10.5c-4-6.5-13.5-3.5-16 4V27v-3.5c-2.5-7.5-12-10.5-16-4-3 6 5 10 5 10V37z"/><path stroke-linejoin="miter" d="M20 8h5"/><path stroke="#eee" d="M32 29.5s8.5-4 6.03-9.65C34.150 14 25 18 22.5 24.5v2.1-2.1C20 18 10.85 14 6.97 19.85 4.5 25.5 13 29.5 13 29.5"/><path stroke="#eee" d="M12.5 30c5.5-3 15.5-3 21 0m-21 3.5c5.5-3 15.5-3 21 0m-21 3.5c5.5-3 15.5-3 21 0"/></g></svg>
<svg style="left:361.80px;top:171.20px" width="39.25" height="39.25" viewBox="0 0 45 45"><g fill="none" fill-rule="evenodd" stroke="#111" stroke-linecap="round" stroke-linejoin="round" stroke-width="1.5"><path fill="#242428" d="M22 10c10.5 1 16.5 8 16 29H15c0-9 10-6.5 8-21"/><path fill="#242428" d="M24 18c.38 2.91-5.55 7.37-8 9-3 2-2.82 4.34-5 4-1.042-.94 1.41-3.04 0-3-1 0 .19 1.23-1 2-1 0-4.003 1-4-4 0-2 6-12 6-12s1.89-1.9 2-3.5c-.73-.994-.5-2-.5-3 1-1 3 2.5 3 2.5h2s.78-1.992 2.5-3c1 0 1 3 1 3"/><path fill="#eee" stroke="#eee" d="M9.5 25.5a.5.5 0 1 1-1 0 .5.5 0 1 1 1 0zm5.433-9.75a.5 1.5 30 1 1-.866-.5.5 1.5 30 1 1 .866.5z"/><path fill="#eee" stroke="none" d="M24.55 10.4l-.45 1.45.5.15c3.15 1 5.650 2.49 7.9 6.75S35.750 29.06 35.25 39l-.05.5h2.25l.05-.5c.5-10.06-.88-16.85-3.25-21.34-2.37-4.49-5.79-6.64-9.19-7.16l-.51-.1z"/></g></svg>
<svg style="left:322.55px;top:210.45px" width="39.25" height="39.25" viewBox="0 0 45 45"><path fill="#242428" stroke="#111" stroke-linecap="round" stroke-width="1.5" d="M22.5 9c-2.21 0-4 1.790-4 4 0 .89.29 1.71.78 2.38C17.33 16.5 16 18.59 16 21c0 2.03.94 3.84 2.41 5.03C15.41 27.09 11 31.58 11 39.5H34c0-7.92-4.41-12.41-7.410-13.47C28.06 24.84 29 23.030 29 21c0-2.41-1.33-4.5-3.28-5.62.49-.67.78-1.49.78-2.38 0-2.21-1.79-4-4-4z"/></svg>
<svg style="left:322.55px;top:249.70px" width="39.25" height="39.25" viewBox="0 0 45 45"><path fill="#f4f0e0" stroke="#1a1a1a" stroke-linecap="round" stroke-width="1.5" d="M22.5 9c-2.21 0-4 1.790-4 4 0 .89.29 1.71.78 2.38C17.33 16.5 16 18.59 16 21c0 2.03.94 3.84 2.41 5.03C15.41 27.09 11 31.58 11 39.5H34c0-7.92-4.41-12.41-7.410-13.47C28.06 24.84 29 23.030 29 21c0-2.41-1.33-4.5-3.28-5.62.49-.67.78-1.49.78-2.38 0-2.21-1.79-4-4-4z"/></svg>
<svg style="left:361.80px;top:288.95px" width="39.25" height="39.25" viewBox="0 0 45 45"><g fill="none" fill-rule="evenodd" stroke="#1a1a1a" stroke-linecap="round" stroke-linejoin="round" stroke-width="1.5"><path fill="#f4f0e0" d="M22 10c10.5 1 16.5 8 16 29H15c0-9 10-6.5 8-21"/><path fill="#f4f0e0" d="M24 18c.38 2.91-5.55 7.37-8 9-3 2-2.82 4.34-5 4-1.042-.94 1.41-3.04 0-3-1 0 .19 1.23-1 2-1 0-4.003 1-4-4 0-2 6-12 6-12s1.89-1.9 2-3.5c-.73-.994-.5-2-.5-3 1-1 3 2.5 3 2.5h2s.78-1.992 2.5-3c1 0 1 3 1 3"/><path fill="#1a1a1a" d="M9.5 25.5a.5.5 0 1 1-1 0 .5.5 0 1 1 1 0zm5.433-9.75a.5 1.5 30 1 1-.866-.5.5 1.5 30 1 1 .866.5z"/></g></svg>
<svg style="left:283.30px;top:367.45px" width="39.25" height="39.25" viewBox="0 0 45 45"><g fill="#f4f0e0" fill-rule="evenodd" stroke="#1a1a1a" stroke-linecap="round" stroke-linejoin="round" stroke-width="1.5"><path stroke-linecap="butt" d="M9 39h27v-3H9v3zM12 36v-4h21v4H12zM11 14V9h4v2h5V9h5v2h5V9h4v5"/><path d="M34 14l-3 3H14l-3-3"/><path stroke-linecap="butt" stroke-linejoin="miter" d="M31 17v12.5H14V17"/><path d="M31 29.5l1.5 2.5h-20l1.5-2.5"/><path fill="none" stroke-linejoin="miter" d="M11 14h23"/></g></svg>
<svg style="left:361.80px;top:367.45px" width="39.25" height="39.25" viewBox="0 0 45 45"><g fill="#f4f0e0" fill-rule="evenodd" stroke="#1a1a1a" stroke-linecap="round" stroke-linejoin="round" stroke-width="1.5"><path stroke-linecap="butt" d="M9 39h27v-3H9v3zM12 36v-4h21v4H12zM11 14V9h4v2h5V9h5v2h5V9h4v5"/><path d="M34 14l-3 3H14l-3-3"/><path stroke-linecap="butt" stroke-linejoin="miter" d="M31 17v12.5H14V17"/><path d="M31 29.5l1.5 2.5h-20l1.5-2.5"/><path fill="none" stroke-linejoin="miter" d="M11 14h23"/></g></svg>
<div class="a" style="left:570px;top:77.2px;width:230px;height:7.8px;background:linear-gradient(#c6d4e2,#aab9ca);border-top:0.7px solid #a4acb4;border-bottom:0.8px solid #98a6b6"></div>
<div class="t" style="left:572px;top:79.6px;font-size:4.95px;color:#222;">Нотация » Книга</div>
<svg style="left:785px;top:77.5px" width="15" height="8"><path d="M2.3 2.6h4l-2 2.4z" fill="#111"/><path d="M9.6 2l3.6 3.6M13.2 2l-3.6 3.6" stroke="#111" stroke-width="0.9"/></svg>
<div class="a" style="left:570px;top:85px;width:230px;height:10px;background:#fff"></div>
<div class="a" style="left:570.3px;top:85px;width:25.5px;height:10.5px;background:#fff;border:0.6px solid #d8d8d8;border-bottom:none"></div>
<div class="a" style="left:595.8px;top:94.8px;width:194px;height:0.6px;background:#d8d8d8"></div>
<div class="t" style="left:574px;top:89.6px;font-size:4.95px;color:#2f6fd0;">Нотация</div>
<div class="t" style="left:598.3px;top:89.6px;font-size:4.95px;color:#333;">Справочная база</div>
<div class="t" style="left:642.2px;top:89.6px;font-size:4.95px;color:#333;">Повтор обучения</div>
<div class="t" style="left:688px;top:89.6px;font-size:4.95px;color:#333;">Проводник плана</div>
<div class="t" style="left:733.5px;top:89.6px;font-size:4.95px;color:#333;">Таблица</div>
<div class="t" style="left:758px;top:89.6px;font-size:4.95px;color:#333;">Бланк парт</div>
<div class="a" style="left:785px;top:85px;width:15px;height:10px;background:#fff"></div>
<svg style="left:785px;top:85px" width="15" height="10"><path d="M4 3.6 L2.6 5 L4 6.4" stroke="#888" stroke-width="0.5" fill="none"/><path d="M10.6 3.6 L12 5 L10.6 6.4" stroke="#888" stroke-width="0.5" fill="none"/><path d="M7.3 1v8" stroke="#e4e4e4" stroke-width="0.5"/></svg>
<div class="a" style="left:570px;top:116.3px;width:230px;height:0.9px;background:#8c8cd0"></div>
<div class="a" style="left:570.5px;top:121.2px;width:3.5px;height:9px;background:#000"></div>
<div class="a" style="left:570px;top:85px;width:0.7px;height:328px;background:#d0d0d0"></div>
<div class="a" style="left:782.4px;top:117.2px;width:5.9px;height:282px;background:#e8e8e8;border-left:0.5px solid #dcdcdc"></div>
<div class="a" style="left:782.6px;top:117.3px;width:5.6px;height:6px;background:#fff;border:0.5px solid #cfcfcf"></div>
<div class="a" style="left:782.6px;top:123.5px;width:5.6px;height:7px;background:#fff;border:0.5px solid #d8d8d8"></div>
<div class="a" style="left:782.6px;top:392.3px;width:5.6px;height:6.2px;background:#fff;border:0.5px solid #cfcfcf"></div>
<svg style="left:782.5px;top:117px" width="6" height="282"><path d="M1.8 3.8 L2.9 2.7 L4 3.8Z" fill="#333"/><path d="M1.8 277.5 L2.9 278.6 L4 277.5Z" fill="#333"/></svg>
<div class="a" style="left:788.4px;top:117.2px;width:1.3px;height:296px;background:#4a4a4a"></div>
<div class="a" style="left:570px;top:402.3px;width:219px;height:1.6px;background:#7a7a7a"></div>
<svg style="left:790px;top:112px" width="10" height="100"><g fill="none" stroke="#111" stroke-width="1.25"><path d="M1.5 8.5 L4.3 5.8 M1.5 8.5 L4.3 11.2 M1.5 8.5 H7"/><path d="M2 16.5 Q3.5 15 5 17 T8 17 M2 21 L6 18" stroke-width="0.9"/><path d="M1.5 27.8 L4.3 25 M1.5 27.8 L4.3 30.6 M1.5 27.8 H7.5"/><path d="M4 34.5 v2.2 M2.5 38 Q2.5 40.5 4.5 40.5 Q6.5 40.5 6.5 38.3 L4.5 36.8" stroke-width="0.9"/></g><circle cx="6.8" cy="10.3" r="1.1" fill="#22a022"/><circle cx="5.6" cy="11.1" r="0.9" fill="#d82020"/><text x="0.6" y="49.3" font-size="6" font-weight="bold" fill="#111" font-family="Liberation Sans" letter-spacing="-0.3">Aa</text><g fill="none" stroke="#444" stroke-width="0.8"><circle cx="3.3" cy="53.8" r="1.6"/><circle cx="6.2" cy="56.4" r="1.6"/><circle cx="4" cy="58.6" r="1.4"/></g><path d="M2 68 L6.8 62.8 L7.9 63.9 L3.1 69Z" fill="#333"/><circle cx="6.4" cy="67.6" r="1.2" fill="#d02020"/><circle cx="3.8" cy="68.6" r="1.1" fill="#22a022"/><rect x="1.5" y="70.2" width="7" height="7" fill="#b87a48"/><rect x="2.1" y="70.8" width="2.6" height="2.6" fill="#222"/><rect x="5.3" y="74" width="2.6" height="2.6" fill="#222"/><rect x="5.3" y="70.8" width="2.6" height="2.6" fill="#e8d0a8"/><rect x="2.1" y="74" width="2.6" height="2.6" fill="#e8d0a8"/><path d="M1.3 84.3 L5.8 79.8 L8.6 82.6 L4.1 87.1Z" fill="#4a6ad8"/><path d="M1.3 84.3 L3.2 82.4 L6 85.2 L4.1 87.1Z" fill="#f0f0ff" stroke="#888" stroke-width="0.3"/><rect x="1.3" y="89.2" width="7.8" height="7.6" fill="#ee1c1c"/></svg>
<div class="a" style="left:574.9px;top:125.89999999999999px;width:85.0px;height:85.0px;background:#6a4a3a;box-shadow:0 0 1px rgba(0,0,0,0.3)"></div>
<svg style="left:575.6px;top:126.6px" width="83.6" height="83.6" viewBox="0 0 8 8" shape-rendering="crispEdges"><rect x="0" y="0" width="8" height="8" fill="#c96a33"/><rect x="0" y="0" width="1" height="1" fill="#f1ddbf"/><rect x="2" y="0" width="1" height="1" fill="#f1ddbf"/><rect x="4" y="0" width="1" height="1" fill="#f1ddbf"/><rect x="6" y="0" width="1" height="1" fill="#f1ddbf"/><rect x="1" y="1" width="1" height="1" fill="#f1ddbf"/><rect x="3" y="1" width="1" height="1" fill="#f1ddbf"/><rect x="5" y="1" width="1" height="1" fill="#f1ddbf"/><rect x="7" y="1" width="1" height="1" fill="#f1ddbf"/><rect x="0" y="2" width="1" height="1" fill="#f1ddbf"/><rect x="2" y="2" width="1" height="1" fill="#f1ddbf"/><rect x="4" y="2" width="1" height="1" fill="#f1ddbf"/><rect x="6" y="2" width="1" height="1" fill="#f1ddbf"/><rect x="1" y="3" width="1" height="1" fill="#f1ddbf"/><rect x="3" y="3" width="1" height="1" fill="#f1ddbf"/><rect x="5" y="3" width="1" height="1" fill="#f1ddbf"/><rect x="7" y="3" width="1" height="1" fill="#f1ddbf"/><rect x="0" y="4" width="1" height="1" fill="#f1ddbf"/><rect x="2" y="4" width="1" height="1" fill="#f1ddbf"/><rect x="4" y="4" width="1" height="1" fill="#f1ddbf"/><rect x="6" y="4" width="1" height="1" fill="#f1ddbf"/><rect x="1" y="5" width="1" height="1" fill="#f1ddbf"/><rect x="3" y="5" width="1" height="1" fill="#f1ddbf"/><rect x="5" y="5" width="1" height="1" fill="#f1ddbf"/><rect x="7" y="5" width="1" height="1" fill="#f1ddbf"/><rect x="0" y="6" width="1" height="1" fill="#f1ddbf"/><rect x="2" y="6" width="1" height="1" fill="#f1ddbf"/><rect x="4" y="6" width="1" height="1" fill="#f1ddbf"/><rect x="6" y="6" width="1" height="1" fill="#f1ddbf"/><rect x="1" y="7" width="1" height="1" fill="#f1ddbf"/><rect x="3" y="7" width="1" height="1" fill="#f1ddbf"/><rect x="5" y="7" width="1" height="1" fill="#f1ddbf"/><rect x="7" y="7" width="1" height="1" fill="#f1ddbf"/></svg>
<svg style="left:638.30px;top:126.60px" width="10.45" height="10.45" viewBox="0 0 45 45"><g fill="none" fill-rule="evenodd" stroke="#1a1a1a" stroke-linecap="round" stroke-linejoin="round" stroke-width="1.5"><path stroke-linejoin="miter" d="M22.5 11.63V6M20 8h5"/><path fill="#f4f0e0" stroke-linecap="butt" stroke-linejoin="miter" d="M22.5 25s4.5-7.5 3-10.5c0 0-1-2.5-3-2.5s-3 2.5-3 2.5c-1.5 3 3 10.5 3 10.5"/><path fill="#f4f0e0" d="M12.5 37c5.5 3.5 15.5 3.5 21 0v-7s9-4.5 6-10.5c-4-6.5-13.5-3.5-16 4V27v-3.5c-2.5-7.5-12-10.5-16-4-3 6 5 10 5 10V37z"/><path d="M12.5 30c5.5-3 15.5-3 21 0m-21 3.5c5.5-3 15.5-3 21 0m-21 3.5c5.5-3 15.5-3 21 0"/></g></svg>
<svg style="left:606.95px;top:137.05px" width="10.45" height="10.45" viewBox="0 0 45 45"><g fill="#242428" fill-rule="evenodd" stroke="#111" stroke-linecap="round" stroke-linejoin="round" stroke-width="1.5"><path stroke-linecap="butt" d="M9 39h27v-3H9v3zM12.5 32l1.5-2.5h17l1.5 2.5h-20zM12 36v-4h21v4H12z"/><path stroke-linecap="butt" stroke-linejoin="miter" d="M14 29.5v-13h17v13H14z"/><path stroke-linecap="butt" d="M14 16.5L11 14h23l-3 2.5H14zM11 14V9h4v2h5V9h5v2h5V9h4v5H11z"/><path fill="none" stroke="#ddd" stroke-linejoin="miter" stroke-width="1" d="M12 35.5h21M13 31.5h19M14 29.5h17M14 16.5h17M11 14h23"/></g></svg>
<svg style="left:648.75px;top:137.05px" width="10.45" height="10.45" viewBox="0 0 45 45"><g fill="#242428" fill-rule="evenodd" stroke="#111" stroke-linecap="round" stroke-linejoin="round" stroke-width="1.5"><path stroke-linecap="butt" d="M9 39h27v-3H9v3zM12.5 32l1.5-2.5h17l1.5 2.5h-20zM12 36v-4h21v4H12z"/><path stroke-linecap="butt" stroke-linejoin="miter" d="M14 29.5v-13h17v13H14z"/><path stroke-linecap="butt" d="M14 16.5L11 14h23l-3 2.5H14zM11 14V9h4v2h5V9h5v2h5V9h4v5H11z"/><path fill="none" stroke="#ddd" stroke-linejoin="miter" stroke-width="1" d="M12 35.5h21M13 31.5h19M14 29.5h17M14 16.5h17M11 14h23"/></g></svg>
<svg style="left:627.85px;top:147.50px" width="10.45" height="10.45" viewBox="0 0 45 45"><g fill="none" fill-rule="evenodd" stroke="#111" stroke-linecap="round" stroke-linejoin="round" stroke-width="1.5"><path stroke-linejoin="miter" d="M22.5 11.63V6"/><path fill="#242428" stroke-linecap="butt" stroke-linejoin="miter" d="M22.5 25s4.5-7.5 3-10.5c0 0-1-2.5-3-2.5s-3 2.5-3 2.5c-1.5 3 3 10.5 3 10.5"/><path fill="#242428" d="M12.5 37c5.5 3.5 15.5 3.5 21 0v-7s9-4.5 6-10.5c-4-6.5-13.5-3.5-16 4V27v-3.5c-2.5-7.5-12-10.5-16-4-3 6 5 10 5 10V37z"/><path stroke-linejoin="miter" d="M20 8h5"/><path stroke="#eee" d="M32 29.5s8.5-4 6.03-9.65C34.150 14 25 18 22.5 24.5v2.1-2.1C20 18 10.85 14 6.97 19.85 4.5 25.5 13 29.5 13 29.5"/><path stroke="#eee" d="M12.5 30c5.5-3 15.5-3 21 0m-21 3.5c5.5-3 15.5-3 21 0m-21 3.5c5.5-3 15.5-3 21 0"/></g></svg>
<svg style="left:638.30px;top:147.50px" width="10.45" height="10.45" viewBox="0 0 45 45"><g fill="none" fill-rule="evenodd" stroke="#111" stroke-linecap="round" stroke-linejoin="round" stroke-width="1.5"><path fill="#242428" d="M22 10c10.5 1 16.5 8 16 29H15c0-9 10-6.5 8-21"/><path fill="#242428" d="M24 18c.38 2.91-5.55 7.37-8 9-3 2-2.82 4.34-5 4-1.042-.94 1.41-3.04 0-3-1 0 .19 1.23-1 2-1 0-4.003 1-4-4 0-2 6-12 6-12s1.89-1.9 2-3.5c-.73-.994-.5-2-.5-3 1-1 3 2.5 3 2.5h2s.78-1.992 2.5-3c1 0 1 3 1 3"/><path fill="#eee" stroke="#eee" d="M9.5 25.5a.5.5 0 1 1-1 0 .5.5 0 1 1 1 0zm5.433-9.75a.5 1.5 30 1 1-.866-.5.5 1.5 30 1 1 .866.5z"/><path fill="#eee" stroke="none" d="M24.55 10.4l-.45 1.45.5.15c3.15 1 5.650 2.49 7.9 6.75S35.750 29.06 35.25 39l-.05.5h2.25l.05-.5c.5-10.06-.88-16.85-3.25-21.34-2.37-4.49-5.79-6.64-9.19-7.16l-.51-.1z"/></g></svg>
<svg style="left:627.85px;top:157.95px" width="10.45" height="10.45" viewBox="0 0 45 45"><path fill="#242428" stroke="#111" stroke-linecap="round" stroke-width="1.5" d="M22.5 9c-2.21 0-4 1.790-4 4 0 .89.29 1.71.78 2.38C17.33 16.5 16 18.59 16 21c0 2.03.94 3.84 2.41 5.03C15.41 27.09 11 31.58 11 39.5H34c0-7.92-4.41-12.41-7.410-13.47C28.06 24.84 29 23.030 29 21c0-2.41-1.33-4.5-3.28-5.62.49-.67.78-1.49.78-2.38 0-2.21-1.79-4-4-4z"/></svg>
<svg style="left:627.85px;top:168.40px" width="10.45" height="10.45" viewBox="0 0 45 45"><path fill="#f4f0e0" stroke="#1a1a1a" stroke-linecap="round" stroke-width="1.5" d="M22.5 9c-2.21 0-4 1.790-4 4 0 .89.29 1.71.78 2.38C17.33 16.5 16 18.59 16 21c0 2.03.94 3.84 2.41 5.03C15.41 27.09 11 31.58 11 39.5H34c0-7.92-4.41-12.41-7.410-13.47C28.06 24.84 29 23.030 29 21c0-2.41-1.33-4.5-3.28-5.62.49-.67.78-1.49.78-2.38 0-2.21-1.79-4-4-4z"/></svg>
<svg style="left:638.30px;top:178.85px" width="10.45" height="10.45" viewBox="0 0 45 45"><g fill="none" fill-rule="evenodd" stroke="#1a1a1a" stroke-linecap="round" stroke-linejoin="round" stroke-width="1.5"><path fill="#f4f0e0" d="M22 10c10.5 1 16.5 8 16 29H15c0-9 10-6.5 8-21"/><path fill="#f4f0e0" d="M24 18c.38 2.91-5.55 7.37-8 9-3 2-2.82 4.34-5 4-1.042-.94 1.41-3.04 0-3-1 0 .19 1.23-1 2-1 0-4.003 1-4-4 0-2 6-12 6-12s1.89-1.9 2-3.5c-.73-.994-.5-2-.5-3 1-1 3 2.5 3 2.5h2s.78-1.992 2.5-3c1 0 1 3 1 3"/><path fill="#1a1a1a" d="M9.5 25.5a.5.5 0 1 1-1 0 .5.5 0 1 1 1 0zm5.433-9.75a.5 1.5 30 1 1-.866-.5.5 1.5 30 1 1 .866.5z"/></g></svg>
<svg style="left:617.40px;top:199.75px" width="10.45" height="10.45" viewBox="0 0 45 45"><g fill="#f4f0e0" fill-rule="evenodd" stroke="#1a1a1a" stroke-linecap="round" stroke-linejoin="round" stroke-width="1.5"><path stroke-linecap="butt" d="M9 39h27v-3H9v3zM12 36v-4h21v4H12zM11 14V9h4v2h5V9h5v2h5V9h4v5"/><path d="M34 14l-3 3H14l-3-3"/><path stroke-linecap="butt" stroke-linejoin="miter" d="M31 17v12.5H14V17"/><path d="M31 29.5l1.5 2.5h-20l1.5-2.5"/><path fill="none" stroke-linejoin="miter" d="M11 14h23"/></g></svg>
<svg style="left:638.30px;top:199.75px" width="10.45" height="10.45" viewBox="0 0 45 45"><g fill="#f4f0e0" fill-rule="evenodd" stroke="#1a1a1a" stroke-linecap="round" stroke-linejoin="round" stroke-width="1.5"><path stroke-linecap="butt" d="M9 39h27v-3H9v3zM12 36v-4h21v4H12zM11 14V9h4v2h5V9h5v2h5V9h4v5"/><path d="M34 14l-3 3H14l-3-3"/><path stroke-linecap="butt" stroke-linejoin="miter" d="M31 17v12.5H14V17"/><path d="M31 29.5l1.5 2.5h-20l1.5-2.5"/><path fill="none" stroke-linejoin="miter" d="M11 14h23"/></g></svg>
<div class="a" style="left:574px;top:412.4px;width:226px;height:10.6px;background:#fff;border-top:0.8px solid #d4d4d4"></div>
<div class="a" style="left:570px;top:412px;width:0.7px;height:11px;background:#d0d0d0"></div>
<div class="a" style="left:572.2px;top:413.5px;width:0.6px;height:9px;background:repeating-linear-gradient(#aaa 0 0.6px,transparent 0.6px 1.4px)"></div>
<svg style="left:577.4px;top:415.6px" width="7" height="7"><path d="M0.4 2.8 L2 0.6 L3.6 2.8Z" fill="#157a15"/><path d="M2 2 V6" stroke="#157a15" stroke-width="1"/></svg>
<svg style="left:588.6px;top:415.6px" width="7" height="7"><path d="M0 1 L4 5 M4 1 L0 5" stroke="#d83030" stroke-width="0.8"/><path d="M0 3 h4" stroke="#d83030" stroke-width="0.5"/></svg>
<svg style="left:599.7px;top:415.6px" width="7" height="7"><path d="M1 0.5 H2.5 V5.5 H1" stroke="#111" stroke-width="0.9" fill="none"/></svg>
<svg style="left:611.6px;top:415.6px" width="7" height="7"><path d="M1.5 0.5 h1.5 M2.2 0.5 V4 M0.5 5.5 h3.5 v-1.5 h-3.5z" stroke="#111" stroke-width="0.8" fill="#111"/></svg>
<svg style="left:621.8px;top:415.6px" width="7" height="7"><path d="M1.5 0.5 V4 M0.3 5.5 h3.5 v-1.5 h-3.5z" stroke="#c82020" stroke-width="0.9" fill="#c82020"/></svg>
<svg style="left:633.7px;top:415.6px" width="7" height="7"><rect x="0" y="0" width="5.5" height="6" fill="#c08050"/><rect x="0.5" y="0.5" width="2" height="2.3" fill="#333"/><rect x="3" y="3.2" width="2" height="2.3" fill="#333"/></svg>
<svg style="left:730px;top:413px" width="70" height="10"><path d="M7 1.6 v3 M5.5 3.1 h3 M5.3 6.3 h3.4 M5.3 7.9 h3.4" stroke="#333" stroke-width="0.8"/><path d="M39 2 h4.4 M39 3.6 h4.4 M39 5.2 h4.4 M39 6.8 h4.4 M39 8.2 h4.4" stroke="#444" stroke-width="1"/><path d="M49.6 1.8 h4 M49.6 3.4 h4 M51.6 3.6 V8 M50 6.6 L51.6 8.4 L53.2 6.6" stroke="#333" stroke-width="0.9" fill="none"/><path d="M60.7 1.8 h3.8 M60.7 3.4 h3.8 M62.6 4.4 v3.8 M60.9 6.3 h3.4" stroke="#333" stroke-width="0.8"/></svg>
<div class="t" style="left:641px;top:413.4px;width:12px;text-align:center;font-size:8.6px;color:#3a3a3a">!!</div>
<div class="t" style="left:652px;top:413.4px;width:12px;text-align:center;font-size:8.6px;color:#3a3a3a">!</div>
<div class="t" style="left:662.9px;top:413.4px;width:12px;text-align:center;font-size:8.6px;color:#3a3a3a">!?</div>
<div class="t" style="left:674.7px;top:413.4px;width:12px;text-align:center;font-size:8.6px;color:#3a3a3a">?!</div>
<div class="t" style="left:685.5px;top:413.4px;width:12px;text-align:center;font-size:8.6px;color:#3a3a3a">?</div>
<div class="t" style="left:697.5px;top:413.4px;width:12px;text-align:center;font-size:8.6px;color:#3a3a3a">??</div>
<div class="t" style="left:708.6px;top:413.4px;width:12px;text-align:center;font-size:8.6px;color:#3a3a3a">←</div>
<div class="t" style="left:719.8px;top:413.4px;width:12px;text-align:center;font-size:8.6px;color:#3a3a3a">±</div>
<div class="t" style="left:742.6px;top:413.4px;width:12px;text-align:center;font-size:8.6px;color:#3a3a3a">=</div>
<div class="t" style="left:753.7px;top:413.4px;width:12px;text-align:center;font-size:8.6px;color:#3a3a3a">∞</div>
<div class="t" style="left:3.5px;top:426.6px;font-size:4.9px;color:#4a4a4a;">Завершено - Загрузить движок</div>
<div class="a" style="left:705.5px;top:425.2px;width:93.5px;height:6.3px;background:#fff;border:0.6px solid #b8b8b8"></div>
<div class="t" style="left:707px;top:426.6px;font-size:4.6px;color:#222;">0%</div>
<div class="a" style="left:722px;top:426.7px;width:55.8px;height:3.3px;background:linear-gradient(#ececec,#d8d8d8);border:0.4px solid #c8c8c8;border-radius:1px"></div>
<svg style="left:5px;top:437px" width="10" height="10"><rect x="1" y="1" width="3.6" height="3.6" fill="#fff"/><rect x="5.2" y="1" width="3.6" height="3.6" fill="#fff"/><rect x="1" y="5.2" width="3.6" height="3.6" fill="#fff"/><rect x="5.2" y="5.2" width="3.6" height="3.6" fill="#fff"/></svg>
<div class="a" style="left:20px;top:433px;width:120px;height:17px;background:#f0f0f0;border-top:0.7px solid #d8d8d8"></div>
<svg style="left:24px;top:437px" width="10" height="10"><circle cx="5.5" cy="4" r="2.6" fill="none" stroke="#222" stroke-width="0.8"/><path d="M3.6 6 L1.2 8.6" stroke="#222" stroke-width="0.9"/></svg>
<div class="t" style="left:37px;top:438.6px;font-size:6.4px;color:#222;">Поиск</div>
<svg style="left:108px;top:433px" width="32" height="17"><path d="M22 17 L21 12 Q22 8 26 6 Q29 4.5 32 4 V17Z" fill="#c8783e"/><path d="M22.5 9 Q26 6.5 32 6.3 M22 11.5 Q27 9 32 9 M22 14 Q27 12 32 12" stroke="#f0b078" stroke-width="0.8" fill="none"/><path d="M10 17 Q12 13 17 12.5 Q21 12.2 24 14 V17Z" fill="#c4743a"/><path d="M12 15.5 Q16 13.6 23 14.8" stroke="#f0b078" stroke-width="0.7" fill="none"/><circle cx="10.5" cy="3.3" r="1.8" fill="#f2bc2a"/><circle cx="13.5" cy="4.6" r="1.9" fill="#e8a818"/><circle cx="17" cy="5.5" r="1.6" fill="#f0b820"/><circle cx="8.5" cy="5.2" r="1.4" fill="#f6c840"/><circle cx="12.3" cy="6.4" r="1.3" fill="#f0c030"/><path d="M12.5 6 L13 12 M15 6 L14.6 11" stroke="#f4f4f4" stroke-width="0.9"/><path d="M11.5 17 Q12.5 13 14 12 Q15.5 13 16.5 17Z" fill="#b8d4e8"/></svg>
<svg style="left:145px;top:436px" width="10" height="11"><rect x="1.2" y="2.6" width="5.4" height="4.4" fill="none" stroke="#ddd" stroke-width="0.7"/><path d="M1.2 1.2 h5.4 M1.2 8.6 h5.4 M8.2 2.2 v1.5 M8.2 5 v1.5 M8.2 7.8 v1" stroke="#ddd" stroke-width="0.7"/></svg>
<svg style="left:165px;top:436px" width="12" height="11"><rect x="1" y="2" width="10" height="7.5" fill="#f0c040"/><rect x="1" y="1.2" width="4" height="1.5" fill="#e0a820"/><rect x="1" y="6.5" width="10" height="3" fill="#2a7ad8"/></svg>
<svg style="left:185px;top:435px" width="14" height="14"><circle cx="6.75" cy="6.5" r="4.3" fill="#db4437"/><path d="M6.75 6.5 L3.0262000000000002 8.65 A4.3 4.3 0 0 0 10.4738 8.65Z" fill="#0f9d58"/><path d="M6.75 6.5 L10.4738 8.65 A4.3 4.3 0 0 0 6.75 2.2Z" fill="#f4b400"/><circle cx="6.75" cy="6.5" r="1.935" fill="#fff"/><circle cx="6.75" cy="6.5" r="1.462" fill="#4285f4"/></svg>
<svg style="left:205px;top:435px" width="14" height="14"><circle cx="7" cy="6.5" r="4.4" fill="#2d8cff"/><text x="7" y="8.2" font-size="4.3" fill="#fff" text-anchor="middle" font-family="Liberation Sans" font-weight="bold">zm</text></svg>
<div class="a" style="left:222.5px;top:433px;width:20px;height:17px;background:#3a3b40"></div>
<div class="a" style="left:222.5px;top:448.8px;width:20px;height:1.2px;background:#e8a0a8"></div>
<svg style="left:226px;top:435px" width="14" height="14"><circle cx="6.5" cy="6.5" r="4.6" fill="#a81e22"/><path d="M4.2 10.8 Q3.8 7.5 4.6 6.2 L3.2 6.8 Q2.6 6 3.4 5.2 L5.6 3 L6 2 L6.8 2.8 Q9.8 3.6 10 7 L9.6 10.8Z" fill="#fff"/><circle cx="5.6" cy="4.6" r="0.35" fill="#333"/></svg>
<div class="a" style="left:245px;top:448.8px;width:17px;height:1.2px;background:#e8a0a8"></div>
<svg style="left:246px;top:435px" width="14" height="14"><circle cx="6.75" cy="6.5" r="4.3" fill="#db4437"/><path d="M6.75 6.5 L3.0262000000000002 8.65 A4.3 4.3 0 0 0 10.4738 8.65Z" fill="#0f9d58"/><path d="M6.75 6.5 L10.4738 8.65 A4.3 4.3 0 0 0 6.75 2.2Z" fill="#f4b400"/><circle cx="6.75" cy="6.5" r="1.935" fill="#fff"/><circle cx="6.75" cy="6.5" r="1.462" fill="#4285f4"/><circle cx="9.6" cy="9.6" r="2.2" fill="#333" stroke="#ddd" stroke-width="0.5"/></svg>
<div class="a" style="left:263.8px;top:433px;width:20px;height:17px;background:#a65a24"></div>
<svg style="left:267px;top:435px" width="14" height="14"><circle cx="6.5" cy="6.5" r="4.4" fill="#fff"/><path d="M4.6 3.8 L6.5 6.8 L8.4 3.8 M6.5 6.8 V9.5" stroke="#e82020" stroke-width="1.1" fill="none"/></svg>
<svg style="left:624px;top:435px" width="176" height="15"><circle cx="6" cy="6.4" r="3.9" fill="#db4437"/><path d="M6 6.4 L2.6226000000000003 8.35 A3.9 3.9 0 0 0 9.3774 8.35Z" fill="#0f9d58"/><path d="M6 6.4 L9.3774 8.35 A3.9 3.9 0 0 0 6 2.5000000000000004Z" fill="#f4b400"/><circle cx="6" cy="6.4" r="1.755" fill="#fff"/><circle cx="6" cy="6.4" r="1.326" fill="#4285f4"/><path d="M12.5 6.5 Q15.5 3 19 5.5 Q16 5 14.5 7 Q16 9 19 7.5 Q15.5 10 12.5 6.5Z" fill="#76b900"/><circle cx="26.4" cy="6.4" r="3.8" fill="#fff"/><path d="M24.9 4.2 L26.4 6.6 L27.9 4.2 M26.4 6.6 V8.8" stroke="#e82020" stroke-width="0.9" fill="none"/><ellipse cx="36.5" cy="6.4" rx="2.8" ry="4" fill="#1878e8"/><path d="M35.3 4.8 L37.6 7.6 L36.5 8.8 V4 L37.6 5.2 L35.3 8" stroke="#fff" stroke-width="0.5" fill="none"/><circle cx="46.7" cy="6.4" r="3.9" fill="#f0c020"/><path d="M44.5 6.4 L46.7 4.2 L48.9 6.4 L46.7 8.6Z" fill="#1a9a3a"/><circle cx="56.4" cy="6.4" r="3.8" fill="#e01a2a"/><ellipse cx="56.4" cy="6.4" rx="1.5" ry="2.6" fill="#1a1b1f"/><circle cx="66.3" cy="6.4" r="3.8" fill="#1a9ae8"/><path d="M64.5 7.5 A2 2 0 1 0 67.6 5" stroke="#fff" stroke-width="0.9" fill="none"/><rect x="75" y="2.5" width="2.4" height="5" rx="1.2" fill="#ddd"/><path d="M74.2 6.5 Q76.2 9.5 78.2 6.5 M76.2 8.2 V10" stroke="#ddd" stroke-width="0.5" fill="none"/><path d="M83.5 3 L86 2 L88.5 3 V6 Q86 9.5 83.5 6Z" fill="#ddd"/><path d="M86.5 10 L88.5 6.5 L90.5 10Z" fill="#f0c020"/><path d="M93 5 h1.5 l2 -2 v7 l-2 -2 H93Z" fill="#ccc"/><path d="M97.8 4.5 Q98.8 6.4 97.8 8.3" stroke="#ccc" stroke-width="0.5" fill="none"/><path d="M103 9.5 h1 v-1.5 h-1Z M105 9.5 h1 v-3 h-1Z M107 9.5 h1 v-4.5 h-1Z M109 9.5 h1 v-6 h-1Z" fill="#aaa"/><rect x="163" y="3" width="7.5" height="6" fill="#ddd"/><path d="M164 9 L165 10.5 L166.5 9" fill="#ddd"/><circle cx="168.5" cy="9.5" r="2.2" fill="#1a1b1f" stroke="#ddd" stroke-width="0.5"/></svg>
<div class="t" style="left:738px;top:439px;font-size:5.0px;color:#ddd;">РУС</div>
<div class="t" style="left:758.5px;top:435.6px;font-size:4.9px;color:#ddd;">16:12</div>
<div class="t" style="left:752.9px;top:443.3px;font-size:4.9px;color:#ddd;">06.10.2024</div>
</div></body></html>
